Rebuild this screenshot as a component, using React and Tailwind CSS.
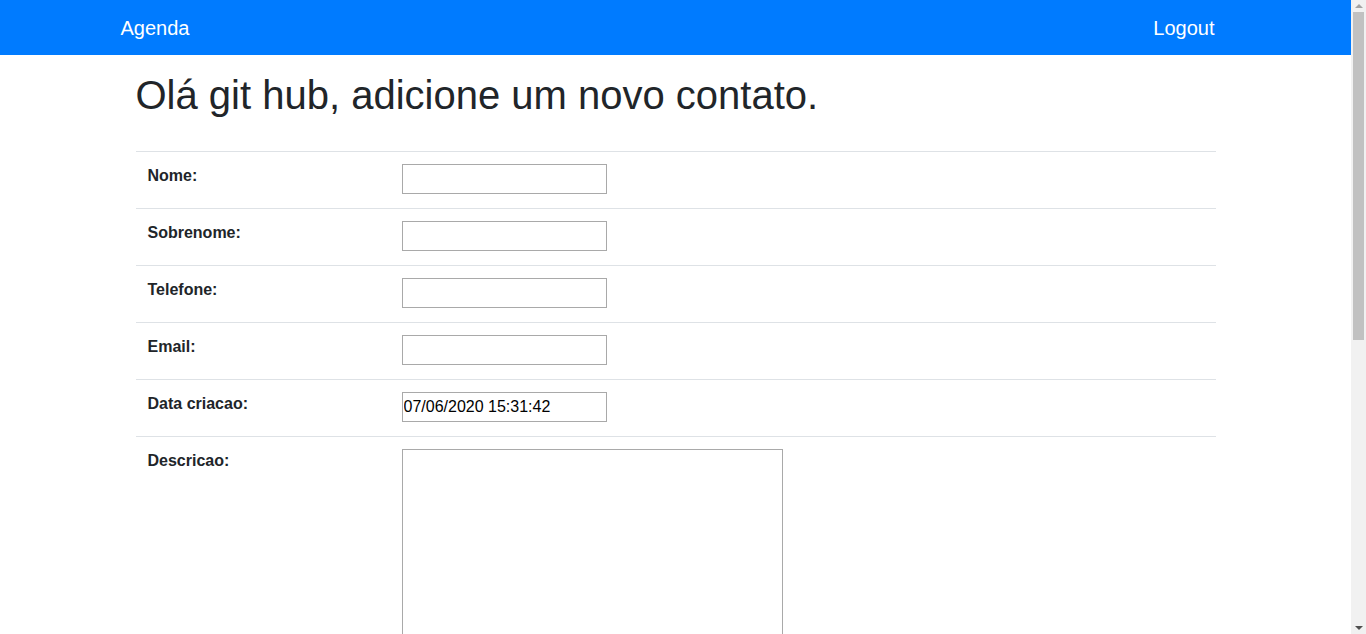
export default function App() {
  const rows = ["Nome:", "Sobrenome:", "Telefone:", "Email:"];
  return (
    <div className="h-[634px] overflow-hidden flex bg-white text-[#212529]" style={{ fontFamily: '"Liberation Sans", Arial, sans-serif' }}>
      <div className="flex-1 h-[634px] overflow-hidden">
        <nav className="bg-[#007bff] h-[55px] flex items-center">
          <div className="w-[1140px] mx-auto px-[15px] flex items-center justify-between">
            <a className="text-white text-[20px] leading-[30px]">Agenda</a>
            <a className="text-white text-[20px] leading-[30px] mr-4">Logout</a>
          </div>
        </nav>
        <div className="w-[1080px] mx-auto">
          <h1 className="text-[40px] leading-[48px] mt-4 mb-8 font-normal">Olá git hub, adicione um novo contato.</h1>
          <div className="flex flex-col">
            {rows.map((r) => (
              <div key={r} className="flex border-t border-[#dee2e6] h-[57px] p-3">
                <div className="w-[254px] font-bold text-[16px] leading-[24px]">{r}</div>
                <input className="w-[205px] h-[30px] border border-[#a9a9a9] px-[1px] text-[16px] outline-none" />
              </div>
            ))}
            <div className="flex border-t border-[#dee2e6] h-[57px] p-3">
              <div className="w-[254px] font-bold text-[16px] leading-[24px]">Data criacao:</div>
              <input className="w-[205px] h-[30px] border border-[#a9a9a9] px-[1px] text-[16px] outline-none text-black" defaultValue="07/06/2020 15:31:42" />
            </div>
            <div className="flex border-t border-[#dee2e6] p-3">
              <div className="w-[254px] font-bold text-[16px] leading-[24px]">Descricao:</div>
              <textarea className="w-[381px] h-[400px] border border-[#a9a9a9] outline-none resize-none" />
            </div>
          </div>
        </div>
      </div>
      <div className="w-[15px] h-[634px] bg-[#f1f1f1] flex flex-col items-center">
        <div className="h-[12px] flex items-center justify-center">
          <div className="w-0 h-0 border-l-[4px] border-r-[4px] border-b-[4px] border-l-transparent border-r-transparent border-b-[#a3a3a3]" />
        </div>
        <div className="w-[11px] h-[328px] bg-[#c1c1c1]" />
        <div className="flex-1" />
        <div className="h-[12px] flex items-center justify-center">
          <div className="w-0 h-0 border-l-[4px] border-r-[4px] border-t-[4px] border-l-transparent border-r-transparent border-t-[#505050]" />
        </div>
      </div>
    </div>
  );
}
